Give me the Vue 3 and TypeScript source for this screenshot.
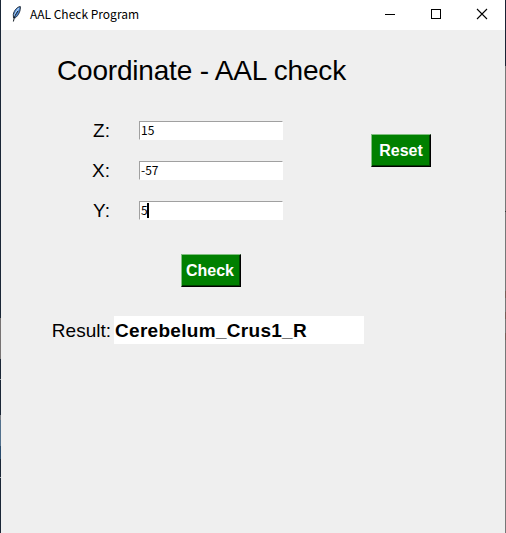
<script setup lang="ts">
import { ref } from 'vue'

interface Field {
  name: string
  value: string
  focused: boolean
}

const fields = ref<Field[]>([
  { name: 'Z', value: '15', focused: false },
  { name: 'X', value: '-57', focused: false },
  { name: 'Y', value: '5', focused: true },
])
const result = ref('Cerebelum_Crus1_R')

function reset() {
  fields.value.forEach((f) => (f.value = ''))
  result.value = ''
}
</script>

<template>
  <div class="desktop">
    <div class="edge edge-left"></div>
    <main class="window">
      <header class="titlebar">
        <svg class="feather" width="12" height="18" viewBox="0 0 12 18">
          <path d="M10.300 1.500C7 2 4 5.500 3.300 9.500L3.500 13L5.300 12.800C8.500 10.500 10.800 5.500 10.300 1.500Z" fill="#4d8ad8" stroke="#26303c" stroke-width="1" />
          <path d="M8.800 3.200C6.500 6 5 8.500 4.400 11" fill="none" stroke="#b5d5f5" stroke-width="1.200" />
          <path d="M8 6C5.700 9 4.200 12 3.400 16.500" fill="none" stroke="#101820" stroke-width="1" />
        </svg>
        <span class="caption">AAL Check Program</span>
        <div class="controls">
          <svg width="12" height="12" viewBox="0 0 12 12" shape-rendering="crispEdges"><path d="M1 6.500H11" stroke="#000" /></svg>
          <svg width="12" height="12" viewBox="0 0 12 12" shape-rendering="crispEdges"><rect x="1.500" y="1.500" width="9" height="9" fill="none" stroke="#000" /></svg>
          <svg width="12" height="12" viewBox="0 0 12 12"><path d="M1 1L11 11M11 1L1 11" stroke="#000" stroke-width="1.100" /></svg>
        </div>
      </header>
      <h1 class="heading">Coordinate - AAL check</h1>
      <section class="form">
        <div class="fields">
          <div v-for="f in fields" :key="f.name" class="row">
            <span class="label">{{ f.name }}:</span>
            <div class="entry"><span>{{ f.value }}</span><i v-if="f.focused" class="caret"></i></div>
          </div>
        </div>
        <button class="btn reset" type="button" @click="reset">Reset</button>
      </section>
      <button class="btn check" type="button">Check</button>
      <section class="result">
        <span class="result-label">Result:</span>
        <output class="result-value">{{ result }}</output>
      </section>
    </main>
    <div class="edge edge-right"></div>
  </div>
</template>

<style>
body {
  margin: 0;
  overflow: hidden;
}
</style>

<style scoped>
.desktop {
  display: grid;
  grid-template-columns: 1px 504px 1px;
  width: 506px;
  height: 533px;
  font-family: "Liberation Sans", Arial, sans-serif;
  color: #000;
}
.edge-left {
  background: linear-gradient(#1a2636 0 318px, #777373 318px 359px, #1a2636 359px 379px, #a0a6ac 379px 380px, #1a2636 380px 415px, #7b7e84 415px 420px, #52708c 420px 446px, #284a6c 446px 459px, #1a2636 459px 477px, #a0a6ac 477px 478px, #1a2636 478px);
}
.edge-right {
  background: linear-gradient(#1a2233 0 66px, #777 66px 211px, #333 211px 212px, #777 212px 291px, #755f58 291px 298px, #777 298px 312px, #755f58 312px 319px, #777 319px 333px, #755f58 333px 340px, #777 340px);
}
.window {
  background: #efefef;
}
.titlebar {
  display: flex;
  align-items: center;
  height: 30px;
  box-sizing: border-box;
  padding: 0 17px 0 9px;
  background: #fff;
}
.feather {
  margin-top: -2px;
}
.caption {
  margin: -2px 0 0 8px;
  font: 12px/16px "Noto Sans CJK KR", "Noto Sans", sans-serif;
  white-space: nowrap;
}
.controls {
  display: flex;
  gap: 34px;
  margin: -2px 0 0 auto;
}
.controls svg {
  display: block;
}
.heading {
  margin: 24px 0 0 56px;
  font-size: 28px;
  line-height: 34px;
  font-weight: 400;
  letter-spacing: -0.19px;
  white-space: nowrap;
}
.form {
  display: flex;
  padding-top: 23px;
}
.fields {
  width: 370px;
}
.row {
  display: flex;
  height: 40px;
}
.label {
  width: 109px;
  font-size: 19px;
  line-height: 40px;
  text-align: right;
}
.entry {
  display: flex;
  box-sizing: border-box;
  width: 144px;
  height: 19px;
  margin: 10px 0 0 29px;
  padding-left: 1px;
  border: 1px solid;
  border-color: #a0a0a0 #fff #fff #a0a0a0;
  background: #fff;
  font: 12px/16px "Noto Sans CJK KR", "Noto Sans", sans-serif;
}
.caret {
  width: 2px;
  height: 15px;
  margin: 1px 0 0 -1px;
  background: #000;
}
.btn {
  display: block;
  box-sizing: border-box;
  width: 60px;
  height: 33px;
  padding: 0 2px 0 0;
  border: 1px solid;
  border-color: #80bf80 #000 #000 #80bf80;
  background: #008000;
  box-shadow: inset -1px -1px #004000;
  color: #fff;
  font: bold 16px/31px "Liberation Sans", Arial, sans-serif;
}
.reset {
  margin-top: 23px;
  padding: 0;
}
.check {
  margin: 23px 0 0 180px;
}
.result {
  display: flex;
  margin-top: 29px;
  line-height: 30px;
}
.result-label {
  width: 110px;
  height: 28px;
  margin-right: 3px;
  font-size: 19px;
  text-align: right;
}
.result-value {
  box-sizing: border-box;
  width: 250px;
  height: 28px;
  padding-left: 1px;
  background: #fff;
  font-size: 19px;
  font-weight: 700;
  letter-spacing: 0.3px;
}
</style>
